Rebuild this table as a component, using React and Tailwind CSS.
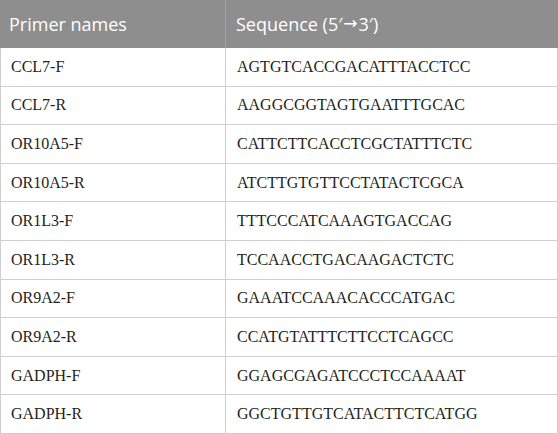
const rows = [
  ['CCL7-F', 'AGTGTCACCGACATTTACCTCC'],
  ['CCL7-R', 'AAGGCGGTAGTGAATTTGCAC'],
  ['OR10A5-F', 'CATTCTTCACCTCGCTATTTCTC'],
  ['OR10A5-R', 'ATCTTGTGTTCCTATACTCGCA'],
  ['OR1L3-F', 'TTTCCCATCAAAGTGACCAG'],
  ['OR1L3-R', 'TCCAACCTGACAAGACTCTC'],
  ['OR9A2-F', 'GAAATCCAAACACCCATGAC'],
  ['OR9A2-R', 'CCATGTATTTCTTCCTCAGCC'],
  ['GADPH-F', 'GGAGCGAGATCCCTCCAAAAT'],
  ['GADPH-R', 'GGCTGTTGTCATACTTCTCATGG'],
];

export default function App() {
  return (
    <div className="w-[558px] h-[434px] bg-white overflow-hidden">
      <div className="grid grid-cols-[226px_1fr] h-[48px] bg-[#8e8e8e] text-white text-[18px] font-[family-name:'Open_Sans',sans-serif]">
        <div className="flex items-center pl-[9px] border-r border-[#a3a3a3]">Primer names</div>
        <div className="flex items-center pl-[10px]">
          Sequence (5′<span className="font-[family-name:'DejaVu_Sans',sans-serif] text-[17px] mx-[1px]">→</span>3′)
        </div>
      </div>
      <div className="border-x border-[#cfcfcf] text-[16px] text-[#231f20]">
        {rows.map(([name, seq]) => (
          <div key={name} className="grid grid-cols-[225px_1fr] h-[38.6px] border-b border-[#cfcfcf] font-serif">
            <div className="flex items-center pl-[10px] border-r border-[#cfcfcf] font-[family-name:'Liberation_Serif','Times_New_Roman','DejaVu_Serif',serif]">{name}</div>
            <div className="flex items-center pl-[11px] font-[family-name:'Liberation_Serif','Times_New_Roman','DejaVu_Serif',serif]">{seq}</div>
          </div>
        ))}
      </div>
    </div>
  );
}
